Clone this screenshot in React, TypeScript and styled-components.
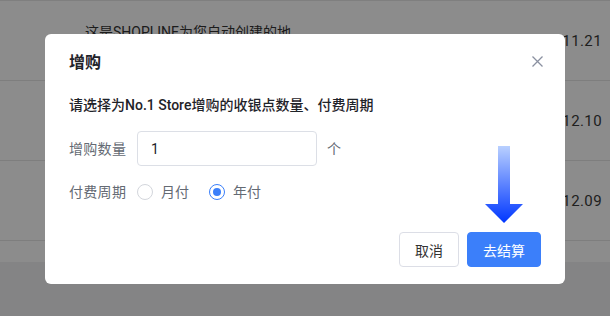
import styled, { createGlobalStyle } from "styled-components";

const GlobalStyle = createGlobalStyle`
  html, body {
    margin: 0;
    padding: 0;
    background: #f0f1f3;
  }
  body {
    font-family: Roboto, "Noto Sans CJK SC", "Noto Sans", sans-serif;
    -webkit-font-smoothing: antialiased;
  }
`;

const Page = styled.div`
  width: 610px;
  height: 316px;
  overflow: hidden;
  background: #f0f1f3;
`;

const Table = styled.div`
  background: #ffffff;
  border-top: 1px solid #e8e8e8;
  padding-bottom: 21px;
`;

const Row = styled.div`
  height: 80px;
  box-sizing: border-box;
  border-bottom: 1px solid #e6e6e6;
  display: flex;
  align-items: center;
  padding: 0 8px 0 85px;
  font-size: 14px;
  color: #333333;
`;

const NameCell = styled.div`
  align-self: flex-start;
  margin-top: 21px;
  line-height: 20px;
`;

const DateCell = styled.div`
  margin-left: auto;
  font-size: 15px;
  letter-spacing: 0.4px;
  color: #3a3a3a;
`;

const Overlay = styled.div`
  position: fixed;
  inset: 0;
  background: rgba(0, 0, 0, 0.45);
  display: flex;
  align-items: center;
  justify-content: center;
`;

const Modal = styled.div`
  position: relative;
  width: 520px;
  box-sizing: border-box;
  margin-top: 2px;
  background: #ffffff;
  border-radius: 6px;
  padding: 17px 24px 17px;
  color: #1f2329;
`;

const Header = styled.div`
  display: flex;
  align-items: center;
  justify-content: space-between;
  height: 24px;
`;

const Title = styled.div`
  font-size: 16px;
  font-weight: 600;
  line-height: 24px;
`;

const CloseButton = styled.button`
  border: none;
  background: none;
  padding: 0;
  margin-right: -2px;
  margin-top: -4px;
  width: 11px;
  height: 11px;
  display: flex;
  cursor: pointer;
`;

const Subtitle = styled.div`
  margin-top: 19px;
  font-size: 14px;
  font-weight: 500;
  line-height: 22px;
`;

const FormRow = styled.div<{ $top: number }>`
  display: flex;
  align-items: center;
  margin-top: ${(p) => p.$top}px;
  font-size: 14px;
  line-height: 22px;
`;

const Label = styled.div`
  width: 68px;
  color: #646a73;
  letter-spacing: 0.3px;
`;

const Input = styled.input`
  width: 180px;
  height: 35px;
  box-sizing: border-box;
  border: 1px solid #dcdfe6;
  border-radius: 4px;
  padding: 0 13px;
  font-family: inherit;
  font-size: 14px;
  color: #1f2329;
  outline: none;
`;

const Unit = styled.span`
  margin-left: 10px;
  color: #646a73;
`;

const RadioOption = styled.label`
  display: flex;
  align-items: center;
  margin-right: 20px;
  color: #646a73;
  cursor: pointer;
`;

const RadioCircle = styled.span<{ $checked?: boolean }>`
  width: 16px;
  height: 16px;
  box-sizing: border-box;
  border-radius: 50%;
  border: 1px solid ${(p) => (p.$checked ? "#3b7ffa" : "#d3d6dc")};
  margin-right: 8px;
  display: flex;
  align-items: center;
  justify-content: center;
  &::after {
    content: "";
    width: 8px;
    height: 8px;
    border-radius: 50%;
    background: #3b7ffa;
    display: ${(p) => (p.$checked ? "block" : "none")};
  }
`;

const Footer = styled.div`
  display: flex;
  justify-content: flex-end;
  gap: 8px;
  margin-top: 29px;
`;

const Button = styled.button<{ $primary?: boolean }>`
  height: 35px;
  padding: 0 15px;
  border-radius: 4px;
  font-family: inherit;
  font-size: 14px;
  border: 1px solid ${(p) => (p.$primary ? "#3b7ffa" : "#dcdee6")};
  background: ${(p) => (p.$primary ? "#3b7ffa" : "#ffffff")};
  color: ${(p) => (p.$primary ? "#ffffff" : "#333333")};
  cursor: pointer;
`;

const ArrowMark = styled.svg`
  position: absolute;
  left: 440px;
  top: 112px;
`;

const rows = [
  { name: "这是SHOPLINE为您自动创建的地", date: "2022.11.21" },
  { name: "", date: "2022.12.10" },
  { name: "", date: "2022.12.09" },
];

const App = () => {
  return (
    <>
      <GlobalStyle />
      <Page>
        <Table>
          {rows.map((r) => (
            <Row key={r.date}>
              <NameCell>{r.name}</NameCell>
              <DateCell>{r.date}</DateCell>
            </Row>
          ))}
        </Table>
      </Page>
      <Overlay>
        <Modal>
          <Header>
            <Title>增购</Title>
            <CloseButton aria-label="close">
              <svg width="11" height="11" viewBox="0 0 11 11">
                <path
                  d="M0.5 0.5 L10.5 10.5 M10.5 0.5 L0.5 10.5"
                  stroke="#8a90a0"
                  strokeWidth="1.3"
                  fill="none"
                />
              </svg>
            </CloseButton>
          </Header>
          <Subtitle>请选择为No.1 Store增购的收银点数量、付费周期</Subtitle>
          <FormRow $top={15}>
            <Label>增购数量</Label>
            <Input defaultValue="1" />
            <Unit>个</Unit>
          </FormRow>
          <FormRow $top={15}>
            <Label>付费周期</Label>
            <RadioOption>
              <RadioCircle />
              月付
            </RadioOption>
            <RadioOption>
              <RadioCircle $checked />
              年付
            </RadioOption>
          </FormRow>
          <Footer>
            <Button>取消</Button>
            <Button $primary>去结算</Button>
          </Footer>
          <ArrowMark width="38" height="77" viewBox="0 0 38 77">
            <defs>
              <linearGradient id="arrowFill" x1="0" y1="0" x2="0" y2="1">
                <stop offset="0" stopColor="#b9d0ff" />
                <stop offset="1" stopColor="#0036ff" />
              </linearGradient>
            </defs>
            <path
              d="M13 0 H25 V58 H38 L19 77 L0 58 H13 Z"
              fill="url(#arrowFill)"
            />
          </ArrowMark>
        </Modal>
      </Overlay>
    </>
  );
};

export default App;
